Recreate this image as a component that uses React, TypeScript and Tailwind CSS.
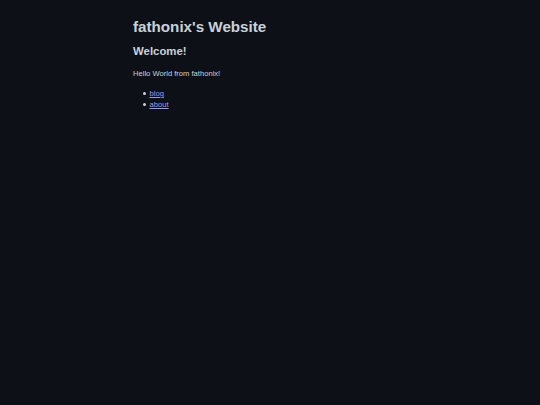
export default function App() {
  return (
    <div className="min-h-[405px] w-full bg-[#0d1117] text-[#c9d1d9]" style={{ fontFamily: '"Liberation Sans", Arial, sans-serif' }}>
      <div className="mx-auto w-[274px] pt-[18px]">
        <h1 className="text-[15.2px] font-bold leading-[17px]">fathonix's Website</h1>
        <h2 className="mt-[10px] text-[11.4px] font-bold leading-[13px]">Welcome!</h2>
        <p className="mt-[11px] text-[7.6px] leading-[9px]">Hello World from fathonix!</p>
        <ul className="mt-[10px] pl-[10px] text-[7.6px] leading-[11px]">
          {["blog", "about"].map((t) => (
            <li key={t} className="flex items-center gap-[4px]">
              <span className="h-[2.5px] w-[2.5px] rounded-full bg-[#c9d1d9]" />
              <a href="#" className="text-[#9a9af0] underline">{t}</a>
            </li>
          ))}
        </ul>
      </div>
    </div>
  );
}
